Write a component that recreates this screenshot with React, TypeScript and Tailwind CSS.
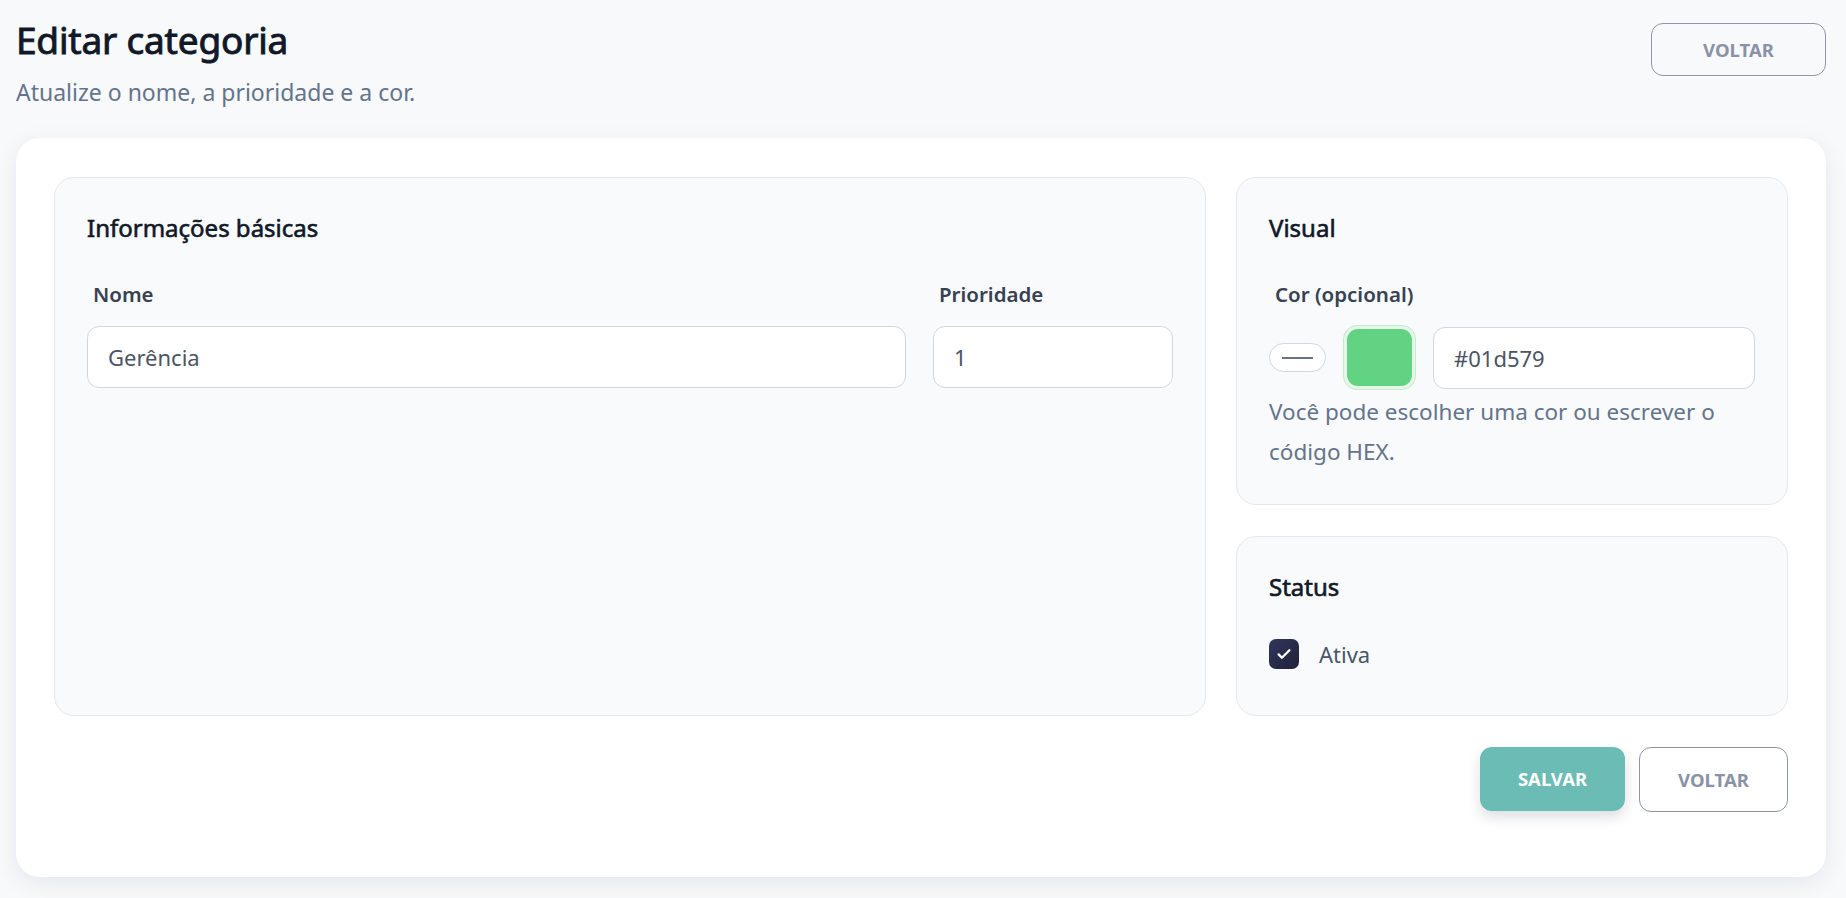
import React from "react";

const Panel: React.FC<{ title: string; className?: string; children: React.ReactNode }> = ({
    title,
    className,
    children,
}) => {
    return (
        <section
            className={`rounded-[20px] border border-[#e5e7eb] bg-[#f8fafc] px-[32px] pt-[34px] ${className ?? ""}`}
        >
            <h2 className="text-[24px] leading-[32px] font-normal text-[#111827] [-webkit-text-stroke:0.6px_currentColor]">
                {title}
            </h2>
            {children}
        </section>
    );
};

const Label: React.FC<{ children: React.ReactNode }> = ({ children }) => (
    <label className="mt-[36px] block pl-[6px] text-[20.5px] leading-[28px] font-semibold text-[#374151]">
        {children}
    </label>
);

const inputClass =
    "mt-[18px] h-[62px] w-full rounded-[12px] border border-[#d4d6db] bg-white px-[20px] text-[22px] text-[#4b5563] outline-none";

const App: React.FC = () => {
    return (
        <div className="min-h-screen bg-[#f7f9fb] pt-[17px] pr-[20px] pl-[16px] font-['Noto_Sans',sans-serif]">
            <header className="flex items-start justify-between">
                <div>
                    <h1 className="text-[37px] leading-[46px] font-normal tracking-[-0.2px] text-[#111827] [-webkit-text-stroke:0.9px_currentColor]">
                        Editar categoria
                    </h1>
                    <p className="mt-[14px] text-[23px] leading-[30px] text-[#64748b]">
                        Atualize o nome, a prioridade e a cor.
                    </p>
                </div>
                <button className="mt-[6px] h-[53px] w-[175px] rounded-[12px] border border-[#8e95a9] bg-transparent text-[18.5px] font-bold text-[#8a92a6]">
                    VOLTAR
                </button>
            </header>

            <main className="mt-[31px] rounded-[24px] bg-white px-[38px] pt-[39px] pb-[65px] shadow-[0_6px_24px_rgba(15,23,42,0.08)]">
                <div className="grid grid-cols-[minmax(0,1fr)_552px] gap-[30px]">
                    <Panel title="Informações básicas">
                        <div className="grid grid-cols-[minmax(0,1fr)_240px] gap-x-[27px]">
                            <div>
                                <Label>Nome</Label>
                                <input defaultValue="Gerência" className={inputClass} />
                            </div>
                            <div>
                                <Label>Prioridade</Label>
                                <input defaultValue="1" className={inputClass} />
                            </div>
                        </div>
                    </Panel>

                    <div className="flex flex-col gap-[31px]">
                        <Panel title="Visual" className="pb-[32px]">
                            <Label>Cor (opcional)</Label>
                            <div className="mt-[17px] flex items-center">
                                <div className="flex h-[29px] w-[57px] items-center justify-center rounded-full border border-[#d4d6db] bg-white">
                                    <span className="h-[2px] w-[31px] bg-[#6b7280]" />
                                </div>
                                <div className="ml-[17px] h-[65px] w-[73px] rounded-[14px] border border-[#c3ebcf] bg-[#e6f7ea] p-[3px]">
                                    <div className="h-full w-full rounded-[11px] bg-[#62d283]" />
                                </div>
                                <input
                                    defaultValue="#01d579"
                                    className="ml-[17px] h-[62px] min-w-0 flex-1 rounded-[12px] border border-[#d4d6db] bg-white px-[20px] text-[22px] text-[#4b5563] outline-none"
                                />
                            </div>
                            <p className="mt-[2px] text-[22.5px] leading-[40px] text-[#64748b]">
                                Você pode escolher uma cor ou escrever o código HEX.
                            </p>
                        </Panel>

                        <Panel title="Status" className="pb-[46px]">
                            <label className="mt-[36px] flex items-center gap-[20px]">
                                <span className="flex h-[30px] w-[30px] items-center justify-center rounded-[7px] bg-gradient-to-br from-[#33365c] to-[#1f2139]">
                                    <svg width="20" height="20" viewBox="0 0 24 24" fill="none" stroke="white" strokeWidth="2.8" strokeLinecap="round" strokeLinejoin="round">
                                        <path d="M5.5 12.5l4 4L18.5 7.5" />
                                    </svg>
                                </span>
                                <span className="text-[22px] leading-[30px] text-[#475569]">Ativa</span>
                            </label>
                        </Panel>
                    </div>
                </div>

                <div className="mt-[31px] flex justify-end gap-[14px]">
                    <button className="h-[64px] w-[145px] rounded-[12px] bg-[#6bbcb5] text-[18.5px] font-bold text-white shadow-[0_6px_14px_rgba(15,23,42,0.14)]">
                        SALVAR
                    </button>
                    <button className="h-[65px] w-[149px] rounded-[12px] border border-[#8e95a9] bg-white text-[18.5px] font-bold text-[#8a92a6]">
                        VOLTAR
                    </button>
                </div>
            </main>
        </div>
    );
};

export default App;
